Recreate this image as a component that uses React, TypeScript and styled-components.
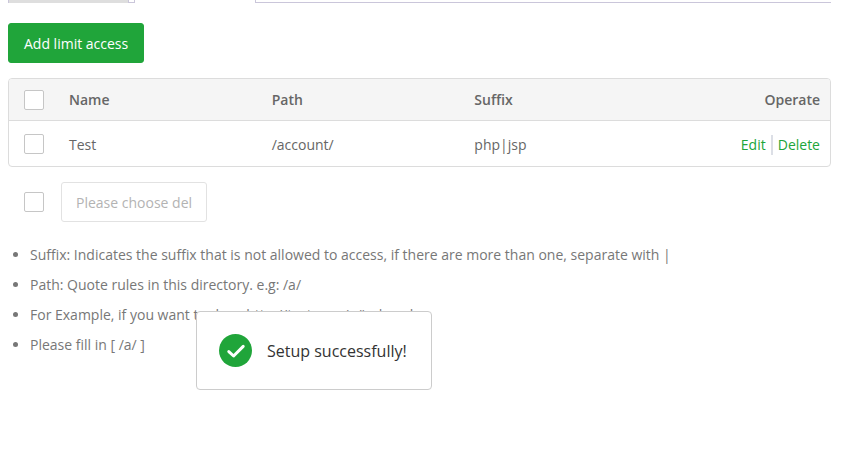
import React from "react";
import styled, { createGlobalStyle } from "styled-components";

const GlobalStyle = createGlobalStyle`
  *, *::before, *::after { box-sizing: border-box; }
  body {
    margin: 0;
    background: #fff;
    color: #666;
    font-family: "Open Sans", "Noto Sans", sans-serif;
    font-size: 14px;
    line-height: 20px;
  }
`;

const Page = styled.main`
  position: relative;
  min-height: 100vh;
  padding: 0 14px 0 8px;
`;

const Tabs = styled.nav`
  display: flex;
  height: 3px;
`;

const Tab = styled.span<{ $active?: boolean }>`
  width: ${(p) => (p.$active ? 122 : 121)}px;
  border: solid #cac6da;
  border-width: 0 1px;
  background: ${(p) => (p.$active ? "#fff" : "#dedede")};
`;

const TabLine = styled.span<{ $grow?: boolean }>`
  flex: ${(p) => (p.$grow ? "1" : "0 0 5px")};
  border-bottom: 1px solid #cac6da;
`;

const Button = styled.button<{ $primary?: boolean }>`
  height: 40px;
  padding: ${(p) => (p.$primary ? "2px 15px 0" : "2px 14px 0")};
  border: 1px solid ${(p) => (p.$primary ? "#20a53a" : "#e2e2e2")};
  border-radius: 3px;
  background: ${(p) => (p.$primary ? "#20a53a" : "#fff")};
  color: ${(p) => (p.$primary ? "#fff" : "#b3b3b3")};
  font: inherit;
  white-space: nowrap;
`;

const Toolbar = styled.div`
  display: flex;
  padding: 20px 0 15px;
`;

const TableFrame = styled.div`
  border: 1px solid #dcdcdc;
  border-radius: 4px;
  overflow: hidden;
`;

const Table = styled.table`
  width: 100%;
  border-collapse: collapse;
  table-layout: fixed;
`;

const Col = styled.col<{ $w?: string }>`
  width: ${(p) => p.$w ?? "auto"};
`;

const HeadRow = styled.tr`
  height: 41px;
  background: #f5f5f5;
  border-bottom: 1px solid #dcdcdc;
`;

const Row = styled.tr`
  height: 46px;
`;

const HeadCell = styled.th<{ $end?: boolean }>`
  padding: 2px 10px 0;
  font-weight: 600;
  text-align: ${(p) => (p.$end ? "right" : "left")};
`;

const Cell = styled.td<{ $end?: boolean }>`
  padding: 4px 10px 0;
  text-align: ${(p) => (p.$end ? "right" : "left")};
`;

const CheckCell = styled.td`
  padding: 1px 0 0 15px;
`;

const Checkbox = styled.input.attrs({ type: "checkbox" })`
  appearance: none;
  display: block;
  flex: none;
  width: 20px;
  height: 20px;
  margin: 0;
  border: 1px solid #c6c6c6;
  border-radius: 2px;
  background: #fff;
  &:checked { background: #20a53a; }
`;

const Actions = styled.div`
  display: flex;
  justify-content: flex-end;
  gap: 5px;
`;

const Divider = styled.span`
  width: 2px;
  height: 20px;
  background: #dcdfe6;
`;

const Action = styled.a`
  color: #20a53a;
  text-decoration: none;
`;

const BatchBar = styled.div`
  display: flex;
  align-items: center;
  gap: 17px;
  padding: 15px 0 18px 16px;
`;

const Notes = styled.ul`
  margin: 0;
  padding: 0 0 0 22px;
  color: #777;
  line-height: 30px;
`;

const Toast = styled.div`
  position: absolute;
  top: 311px;
  left: 196px;
  display: flex;
  align-items: center;
  gap: 15px;
  height: 79px;
  padding: 0 24px 0 22px;
  border: 1px solid #ccc;
  border-radius: 4px;
  background: #fff;
  color: #333;
  font-size: 16px;
  white-space: nowrap;
`;

const notes = [
  "Suffix: Indicates the suffix that is not allowed to access, if there are more than one, separate with |",
  "Path: Quote rules in this directory. e.g: /a/",
  "For Example, if you want to deny http://test.com/a/index.php",
  "Please fill in [ /a/ ]",
];

export default function App() {
  return (
    <>
      <GlobalStyle />
      <Page>
        <Tabs>
          <Tab />
          <TabLine />
          <Tab $active />
          <TabLine $grow />
        </Tabs>
        <Toolbar>
          <Button $primary>Add limit access</Button>
        </Toolbar>
        <TableFrame>
          <Table>
            <colgroup>
              <Col $w="50px" />
              <Col />
              <Col />
              <Col />
              <Col $w="163px" />
            </colgroup>
            <thead>
              <HeadRow>
                <CheckCell as="th">
                  <Checkbox aria-label="Select all rows" />
                </CheckCell>
                <HeadCell>Name</HeadCell>
                <HeadCell>Path</HeadCell>
                <HeadCell>Suffix</HeadCell>
                <HeadCell $end>Operate</HeadCell>
              </HeadRow>
            </thead>
            <tbody>
              <Row>
                <CheckCell>
                  <Checkbox aria-label="Select Test" />
                </CheckCell>
                <Cell>Test</Cell>
                <Cell>/account/</Cell>
                <Cell>php|jsp</Cell>
                <Cell $end>
                  <Actions>
                    <Action href="#edit">Edit</Action>
                    <Divider />
                    <Action href="#delete">Delete</Action>
                  </Actions>
                </Cell>
              </Row>
            </tbody>
          </Table>
        </TableFrame>
        <BatchBar>
          <Checkbox aria-label="Select for batch action" />
          <Button disabled>Please choose del</Button>
        </BatchBar>
        <Notes>
          {notes.map((note) => (
            <li key={note}>{note}</li>
          ))}
        </Notes>
        <Toast role="status">
          <svg width="33" height="33" viewBox="0 0 33 33" aria-hidden="true">
            <circle cx="16.5" cy="16.5" r="16.5" fill="#20a53a" />
            <path
              d="M9.8 17.6 L14.6 22 L24.2 12.4"
              fill="none"
              stroke="#fff"
              strokeWidth="3"
              strokeLinecap="round"
              strokeLinejoin="round"
            />
          </svg>
          <span>Setup successfully!</span>
        </Toast>
      </Page>
    </>
  );
}
